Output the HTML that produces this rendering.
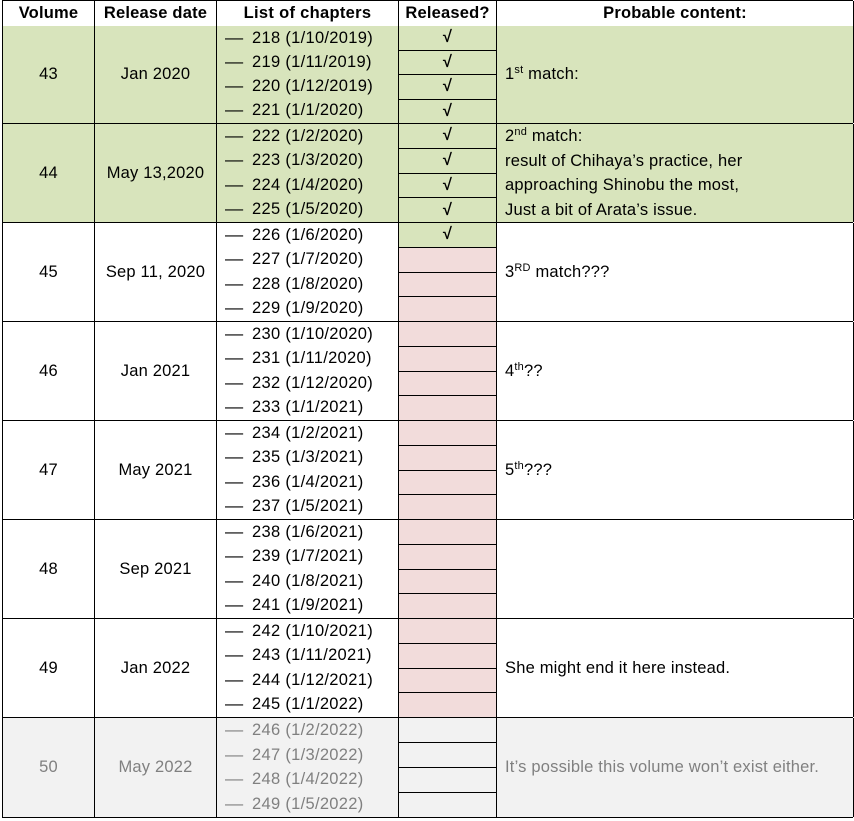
<!DOCTYPE html>
<html><head><meta charset="utf-8"><style>
*{box-sizing:border-box;margin:0;padding:0}
body{width:854px;height:821px;background:#fff;font-family:"Liberation Sans",Carlito,sans-serif;font-size:16.5px;color:#000;position:relative;overflow:hidden;letter-spacing:0.2px}
.row{position:absolute;left:2px;width:851px;border-bottom:1px solid #000;border-left:1px solid #000}
.c{position:absolute;top:0;bottom:0;border-right:1px solid #000;display:flex;align-items:center}
.c1{left:0;width:92px;justify-content:center}
.c2{left:92px;width:122px;justify-content:center}
.c3{left:214px;width:182px;flex-direction:column;align-items:flex-start;padding-left:8px;justify-content:space-around;letter-spacing:0.3px}
.c3 span b{font-weight:normal;display:inline-block;width:27px;transform:scaleX(1.1);transform-origin:left}
.c4{left:396px;width:98px;flex-direction:column;align-items:stretch}
.c5{left:494px;width:357px;padding-left:8px}
.c4 div{flex:1;border-bottom:1px solid #000;display:flex;align-items:center;justify-content:center;font-weight:bold}
.c4 div:last-child{border-bottom:none}
.hd{top:0;height:27px;border-top:1px solid #000;font-weight:bold}
.hd .c{justify-content:center;padding:0}
.g{background:#d8e4bc}
.p{background:#f2dcdb}
.w{background:#fff}
.gr{background:#f2f2f2;color:#808080}
sup{font-size:11px;vertical-align:6px;line-height:0}
.c5 .t{line-height:24.5px}
</style></head><body>
<div class="row hd"><div class="c c1">Volume</div><div class="c c2">Release date</div><div class="c c3" style="align-items:center;padding:0">List of chapters</div><div class="c c4" style="align-items:center;justify-content:center">Released?</div><div class="c c5" style="justify-content:center;padding:0">Probable content:</div></div>

<div class="row g" style="top:26px;height:98px"><div class="c c1">43</div><div class="c c2">Jan 2020</div><div class="c c3"><span><b>—</b>218 (1/10/2019)</span><span><b>—</b>219 (1/11/2019)</span><span><b>—</b>220 (1/12/2019)</span><span><b>—</b>221 (1/1/2020)</span></div><div class="c c4"><div>√</div><div>√</div><div>√</div><div>√</div></div><div class="c c5"><span>1<sup>st</sup> match:</span></div></div>

<div class="row g" style="top:124px;height:99px"><div class="c c1">44</div><div class="c c2">May 13,2020</div><div class="c c3"><span><b>—</b>222 (1/2/2020)</span><span><b>—</b>223 (1/3/2020)</span><span><b>—</b>224 (1/4/2020)</span><span><b>—</b>225 (1/5/2020)</span></div><div class="c c4"><div>√</div><div>√</div><div>√</div><div>√</div></div><div class="c c5"><div class="t">2<sup>nd</sup> match:<br>result of Chihaya’s practice, her<br>approaching Shinobu the most,<br>Just a bit of Arata’s issue.</div></div></div>

<div class="row w" style="top:223px;height:99px"><div class="c c1">45</div><div class="c c2">Sep 11, 2020</div><div class="c c3"><span><b>—</b>226 (1/6/2020)</span><span><b>—</b>227 (1/7/2020)</span><span><b>—</b>228 (1/8/2020)</span><span><b>—</b>229 (1/9/2020)</span></div><div class="c c4"><div class="g">√</div><div class="p"></div><div class="p"></div><div class="p"></div></div><div class="c c5"><span>3<sup>RD</sup> match???</span></div></div>

<div class="row w" style="top:322px;height:99px"><div class="c c1">46</div><div class="c c2">Jan 2021</div><div class="c c3"><span><b>—</b>230 (1/10/2020)</span><span><b>—</b>231 (1/11/2020)</span><span><b>—</b>232 (1/12/2020)</span><span><b>—</b>233 (1/1/2021)</span></div><div class="c c4"><div class="p"></div><div class="p"></div><div class="p"></div><div class="p"></div></div><div class="c c5"><span>4<sup>th</sup>??</span></div></div>

<div class="row w" style="top:421px;height:99px"><div class="c c1">47</div><div class="c c2">May 2021</div><div class="c c3"><span><b>—</b>234 (1/2/2021)</span><span><b>—</b>235 (1/3/2021)</span><span><b>—</b>236 (1/4/2021)</span><span><b>—</b>237 (1/5/2021)</span></div><div class="c c4"><div class="p"></div><div class="p"></div><div class="p"></div><div class="p"></div></div><div class="c c5"><span>5<sup>th</sup>???</span></div></div>

<div class="row w" style="top:520px;height:99px"><div class="c c1">48</div><div class="c c2">Sep 2021</div><div class="c c3"><span><b>—</b>238 (1/6/2021)</span><span><b>—</b>239 (1/7/2021)</span><span><b>—</b>240 (1/8/2021)</span><span><b>—</b>241 (1/9/2021)</span></div><div class="c c4"><div class="p"></div><div class="p"></div><div class="p"></div><div class="p"></div></div><div class="c c5"></div></div>

<div class="row w" style="top:619px;height:99px"><div class="c c1">49</div><div class="c c2">Jan 2022</div><div class="c c3"><span><b>—</b>242 (1/10/2021)</span><span><b>—</b>243 (1/11/2021)</span><span><b>—</b>244 (1/12/2021)</span><span><b>—</b>245 (1/1/2022)</span></div><div class="c c4"><div class="p"></div><div class="p"></div><div class="p"></div><div class="p"></div></div><div class="c c5">She might end it here instead.</div></div>

<div class="row gr" style="top:718px;height:100px"><div class="c c1">50</div><div class="c c2">May 2022</div><div class="c c3"><span><b>—</b>246 (1/2/2022)</span><span><b>—</b>247 (1/3/2022)</span><span><b>—</b>248 (1/4/2022)</span><span><b>—</b>249 (1/5/2022)</span></div><div class="c c4"><div></div><div></div><div></div><div></div></div><div class="c c5">It’s possible this volume won’t exist either.</div></div>
</body></html>
